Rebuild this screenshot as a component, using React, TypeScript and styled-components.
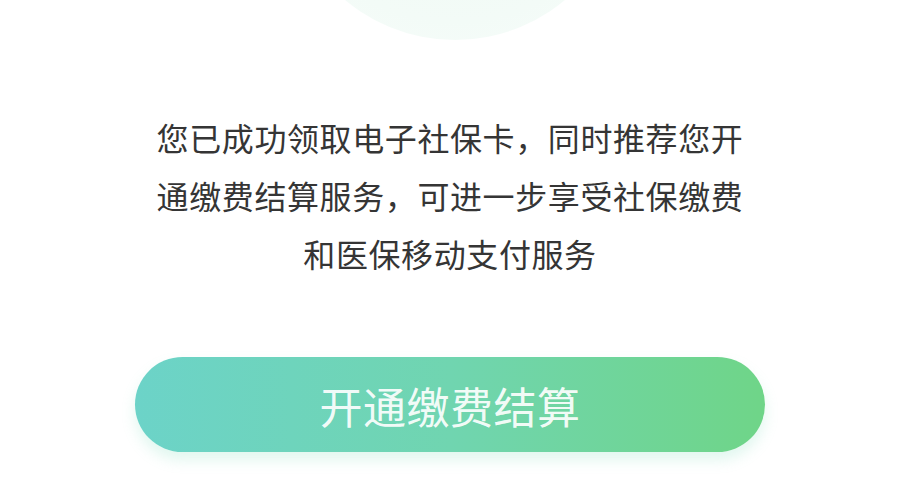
import styled, { createGlobalStyle } from "styled-components";

const GlobalStyle = createGlobalStyle`
    html, body {
        margin: 0;
        padding: 0;
        background: #ffffff;
    }
    body {
        font-family: "Noto Sans CJK SC", "Noto Sans", sans-serif;
    }
`;

const Page = styled.div`
    position: relative;
    width: 900px;
    height: 500px;
    overflow: hidden;
    display: flex;
    flex-direction: column;
    align-items: center;
    background: #ffffff;
`;

// faint circle at the top (bottom edge of the success illustration)
const Halo = styled.div`
    position: absolute;
    left: 284px;
    top: -302px;
    width: 342px;
    height: 342px;
    border-radius: 50%;
    background: radial-gradient(circle at 50% 40%, #eefaf3 0%, #f3fbf7 70%, #f8fdfb 100%);
`;

const Message = styled.p`
    margin: 108px 0 0;
    width: 600px;
    font-size: 32px;
    line-height: 58px;
    letter-spacing: 0.6px;
    color: #353535;
    text-align: center;
`;

const ActionButton = styled.button`
    margin-top: 75px;
    width: 630px;
    height: 95px;
    border: none;
    border-radius: 48px;
    background: linear-gradient(90deg, #6cd3c8 0%, #70d5b0 50%, #6fd588 100%);
    box-shadow: 0 8px 14px rgba(120, 220, 180, 0.22);
    font-family: "Noto Sans CJK SC", "Noto Sans", sans-serif;
    font-size: 43px;
    letter-spacing: 0.5px;
    color: rgba(255, 255, 255, 0.93);
    cursor: pointer;
`;

export default function App() {
    return (
        <>
            <GlobalStyle />
            <Page>
                <Halo />
                <Message>
                    您已成功领取电子社保卡，同时推荐您开通缴费结算服务，可进一步享受社保缴费和医保移动支付服务
                </Message>
                <ActionButton>开通缴费结算</ActionButton>
            </Page>
        </>
    );
}
